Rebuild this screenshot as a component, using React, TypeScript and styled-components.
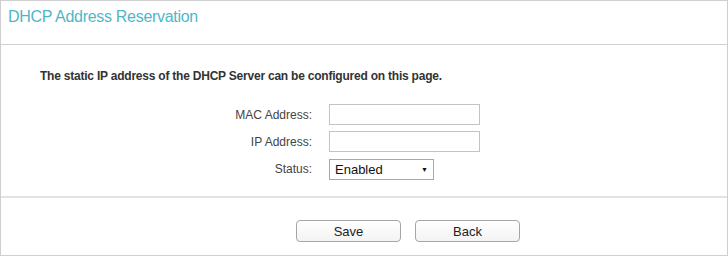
import React from "react";
import styled, { createGlobalStyle } from "styled-components";

const Global = createGlobalStyle`
  html, body { margin: 0; padding: 0; background: #fff; }
  body { font-family: "Liberation Sans", Arial, sans-serif; }
  * { box-sizing: border-box; }
`;

const Panel = styled.div`
  width: 728px;
  height: 256px;
  border: 1px solid #cfcfcf;
  display: flex;
  flex-direction: column;
  background: #fff;
`;

const Header = styled.div`
  height: 44px;
  flex: none;
  padding: 7px 0 0 7px;
  border-bottom: 1px solid #cfcfcf;
`;

const Title = styled.h1`
  margin: 0;
  font-weight: normal;
  font-size: 16px;
  line-height: 18px;
  letter-spacing: -0.3px;
  color: #4fb6c7;
`;

const Body = styled.div`
  flex: none;
  padding: 24px 0 16px 39px;
  border-bottom: 2px solid #e3e3e3;
`;

const Intro = styled.p`
  margin: 0 0 21px;
  font-size: 12px;
  font-weight: bold;
  line-height: 14px;
  letter-spacing: -0.22px;
  color: #333;
`;

const Form = styled.div`
  display: grid;
  grid-template-columns: 272px auto;
  column-gap: 17px;
  row-gap: 6px;
  align-items: center;
`;

const Label = styled.label`
  text-align: right;
  font-size: 12px;
  color: #444;
`;

const TextInput = styled.input`
  width: 151px;
  height: 21px;
  border: 1px solid #c3c3c3;
  padding: 0 4px;
  font: inherit;
  font-size: 13px;
  outline: none;
`;

const SelectBox = styled.div`
  width: 105px;
  height: 21px;
  margin-top: 1px;
  border: 1px solid #a8a8a8;
  display: flex;
  align-items: center;
  justify-content: space-between;
  padding: 0 5px 0 5px;
  font-size: 13px;
  color: #111;
`;

const Arrow = styled.span`
  font-size: 7px;
  color: #111;
`;

const Footer = styled.div`
  flex: 1;
  display: flex;
  gap: 14px;
  padding: 22px 0 0 295px;
`;

const Button = styled.button`
  width: 105px;
  height: 22px;
  border: 1px solid #a6a6a6;
  border-radius: 4px;
  background: linear-gradient(#ffffff, #f3f3f3);
  font-family: "Liberation Sans", Arial, sans-serif;
  font-size: 13px;
  color: #222;
  padding: 0;
  cursor: pointer;
`;

export default function App() {
  return (
    <>
      <Global />
      <Panel>
        <Header>
          <Title>DHCP Address Reservation</Title>
        </Header>
        <Body>
          <Intro>The static IP address of the DHCP Server can be configured on this page.</Intro>
          <Form>
            <Label>MAC Address:</Label>
            <TextInput />
            <Label>IP Address:</Label>
            <TextInput />
            <Label>Status:</Label>
            <SelectBox>
              <span>Enabled</span>
              <Arrow>▼</Arrow>
            </SelectBox>
          </Form>
        </Body>
        <Footer>
          <Button>Save</Button>
          <Button>Back</Button>
        </Footer>
      </Panel>
    </>
  );
}
